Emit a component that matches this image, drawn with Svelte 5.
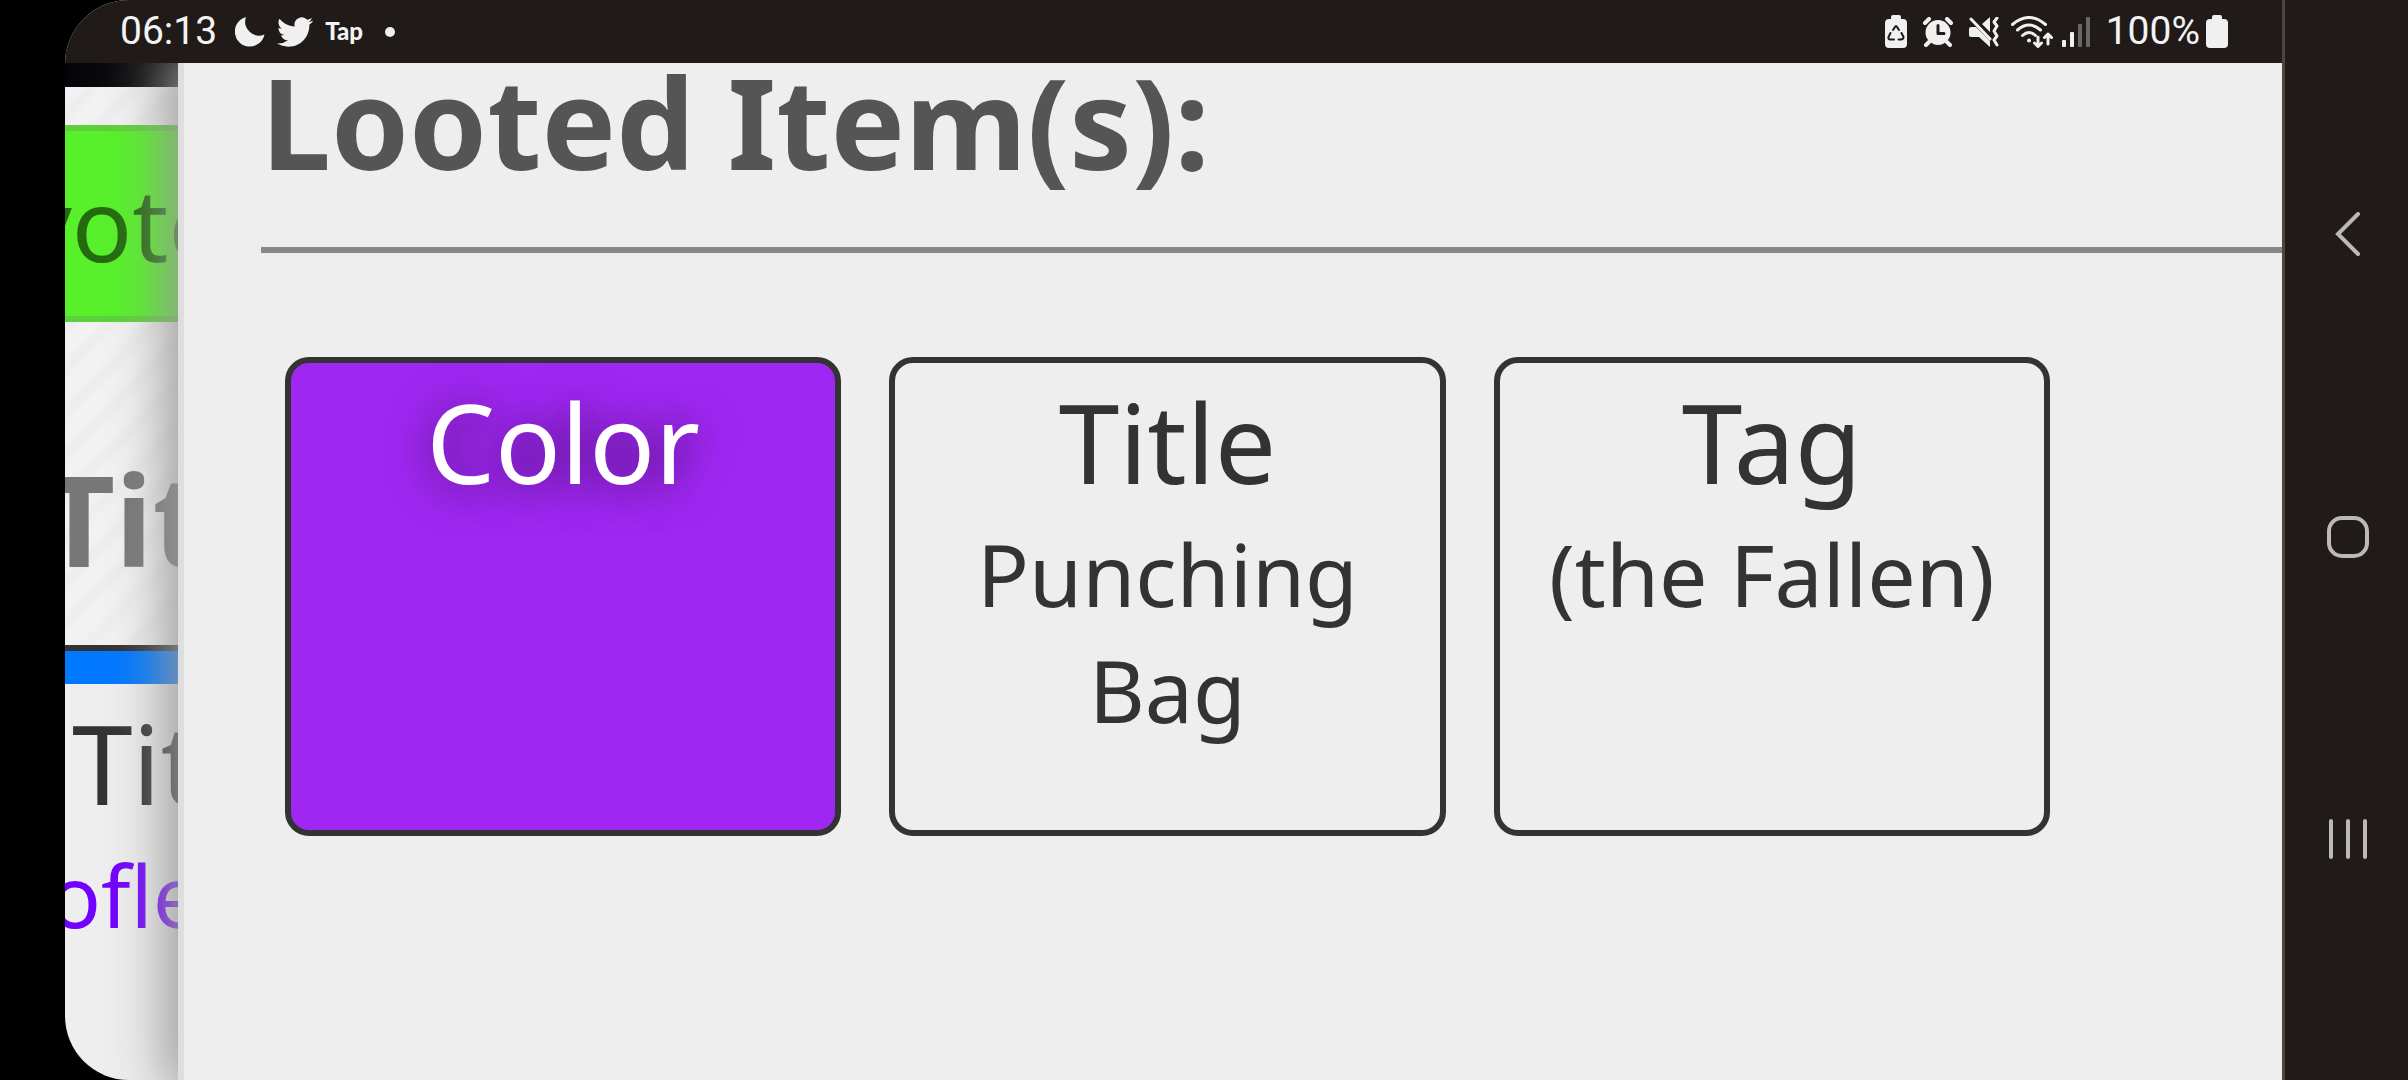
<script lang="ts">
    type Loot = {
        kind: string;
        value?: string;
        color?: string;
    };

    const loot: Loot[] = [
        { kind: "Color", color: "#a027f2" },
        { kind: "Title", value: "Punching Bag" },
        { kind: "Tag", value: "(the Fallen)" },
    ];

    const time = "06:13";
    const battery = "100%";
</script>

<div class="device">
    <div class="screen">
        <header class="status">
            <div class="left">
                <span class="clock">{time}</span>
                <svg class="moon" width="30" height="32" viewBox="0 0 30 32" aria-hidden="true">
                    <path d="M11 1A15 15 0 1 0 29.500 18.500A14 14 0 0 1 11 1Z" />
                </svg>
                <svg width="36" height="36" viewBox="0 0 24 24" aria-hidden="true">
                    <path
                        d="M23.953 4.57a10 10 0 01-2.825.775 4.958 4.958 0 002.163-2.723c-.951.555-2.005.959-3.127 1.184a4.92 4.92 0 00-8.384 4.482C7.69 8.095 4.067 6.13 1.64 3.162a4.822 4.822 0 00-.666 2.475c0 1.71.87 3.213 2.188 4.096a4.904 4.904 0 01-2.228-.616v.06a4.923 4.923 0 003.946 4.827 4.996 4.996 0 01-2.212.085 4.936 4.936 0 004.604 3.417 9.867 9.867 0 01-6.102 2.105c-.39 0-.779-.023-1.17-.067a13.995 13.995 0 007.557 2.209c9.053 0 13.998-7.496 13.998-13.985 0-.21 0-.42-.015-.63A9.935 9.935 0 0024 4.59z"
                    />
                </svg>
                <span class="tap">Tap</span>
                <span class="dot"></span>
            </div>
            <div class="right">
                <!-- battery saver -->
                <svg width="22" height="34" viewBox="0 0 22 34" aria-hidden="true">
                    <path d="M6 4V2q0-2 2-2h6q2 0 2 2v2h2q4 0 4 4v21q0 4-4 4H4q-4 0-4-4V8q0-4 4-4z" />
                    <g class="cut">
                        <path d="M8 15l2-3q1-2 2 0l2 3M16.500 18l2 4q0 2-2 2.500h-3M9 24.500H5q-2-.5-1.500-2.500l2-4" />
                    </g>
                </svg>
                <!-- alarm -->
                <svg width="30" height="30" viewBox="0 0 30 30" aria-hidden="true">
                    <circle cx="15" cy="15.500" r="12.500" />
                    <path class="line thick" d="M2 6l4-4M24 2l4 4M6 25l-3 3M24 25l3 3" />
                    <path class="cut wide" d="M15 8.500v8h6" />
                </svg>
                <!-- muted, vibrating -->
                <svg width="30" height="30" viewBox="0 0 30 30" aria-hidden="true">
                    <path d="M0 12q0-2 2-2h5l14 14v6L10 20H2q-2 0-2-2zM13 7l8-7v15z" />
                    <path class="line" d="M2 2l19 20" />
                    <path class="line" d="M28 1l-3 4 3 4-3 5 3 5-3 4 3 5" />
                </svg>
                <svg class="wifi" width="42" height="32" viewBox="0 0 42 32" aria-hidden="true">
                    <path class="line" d="M1.500 8.500q16-14 33 0M6.500 14q11.500-10 23 0M11.500 19.500q6.500-6 13 0" />
                    <circle cx="18" cy="24.500" r="2" />
                    <path class="line" d="M27 21v9M23.500 27l3.500 3.500 3.500-3.500M37 28v-10M33.500 21.500L37 18l3.500 3.500" />
                </svg>
                <svg width="28" height="30" viewBox="0 0 28 30" aria-hidden="true">
                    <rect x="0" y="23" width="4" height="7" rx="1" />
                    <rect x="8" y="15" width="4" height="15" rx="1" />
                    <rect class="dim" x="16" y="7" width="4" height="23" rx="1" />
                    <rect class="dim" x="24" y="0" width="4" height="30" rx="1" />
                </svg>
                <span class="clock">{battery}</span>
                <svg class="battery" width="22" height="34" viewBox="0 0 22 34" aria-hidden="true">
                    <path d="M6 4V2q0-2 2-2h6q2 0 2 2v2h2q4 0 4 4v21q0 4-4 4H4q-4 0-4-4V8q0-4 4-4z" />
                </svg>
            </div>
        </header>

        <div class="body">
            <div class="behind">
                <div class="topbar"></div>
                <div class="striped">
                    <div class="vote">vote</div>
                    <h2>Title</h2>
                </div>
                <div class="stripe"></div>
                <div class="entry">
                    <div class="kind">Title</div>
                    <div class="value">ofle</div>
                </div>
            </div>

            <main class="sheet">
                <h1>Looted Item(s):</h1>
                <div class="cards">
                    {#each loot as item}
                        <section
                            class="card"
                            class:colored={item.color}
                            style:background-color={item.color}
                        >
                            <div class="kind">{item.kind}</div>
                            {#if item.value}
                                <div class="value">{item.value}</div>
                            {/if}
                        </section>
                    {/each}
                </div>
            </main>
        </div>
    </div>

    <nav class="keys">
        <button aria-label="Back">
            <svg width="44" height="44" viewBox="0 0 44 44">
                <path d="M32 2L12 22l20 20" />
            </svg>
        </button>
        <button aria-label="Home">
            <svg width="44" height="44" viewBox="0 0 44 44">
                <rect x="3" y="3" width="38" height="38" rx="13" />
            </svg>
        </button>
        <button aria-label="Recent apps">
            <svg width="44" height="44" viewBox="0 0 44 44">
                <path d="M5 4v36M22 4v36M39 4v36" />
            </svg>
        </button>
    </nav>
</div>

<style>
    :global(body) {
        margin: 0;
        background: #000;
    }

    .device {
        display: flex;
        box-sizing: border-box;
        min-height: 100vh;
        padding-left: 65px;
        background: #000;
        color: #333;
        font-family: "Noto Sans", sans-serif;
    }

    .screen {
        flex: 1;
        min-width: 0;
        display: flex;
        flex-direction: column;
        border-radius: 64px 0 0 64px;
        overflow: hidden;
        background: #eee;
    }

    .status {
        display: flex;
        justify-content: space-between;
        align-items: center;
        height: 63px;
        padding: 0 54px 0 55px;
        background: #201b19;
        color: #f3f3f3;
        font-family: Roboto, sans-serif;
    }

    .status svg {
        fill: #f0f0f0;
    }

    .left,
    .right {
        display: flex;
        align-items: center;
    }

    .left {
        gap: 12px;
    }

    .right {
        gap: 16px;
    }

    .clock {
        font-size: 39px;
        line-height: 63px;
    }

    .moon {
        margin-left: 6px;
    }

    .tap {
        padding-bottom: 2px;
        font-family: Lato, sans-serif;
        font-size: 24px;
        font-weight: 900;
        line-height: 32px;
    }

    .dot {
        width: 10px;
        height: 10px;
        margin-left: 10px;
        border-radius: 50%;
        background: #f0f0f0;
    }

    .battery {
        margin-left: -10px;
    }

    .wifi {
        margin: 0 -7px 0 -4px;
    }

    .line,
    .cut {
        fill: none;
        stroke: #f0f0f0;
        stroke-width: 3;
        stroke-linecap: round;
        stroke-linejoin: round;
    }

    .thick {
        stroke-width: 4;
    }

    .cut {
        stroke: #201b19;
        stroke-width: 2;
    }

    .wide {
        stroke-width: 3;
    }

    .dim {
        fill: #6b6765;
    }

    .body {
        flex: 1;
        display: flex;
        overflow: hidden;
    }

    .behind {
        width: 113px;
        overflow: hidden;
        white-space: nowrap;
    }

    .topbar {
        height: 24px;
        background: linear-gradient(90deg, #020308, #1a1718);
    }

    .striped {
        padding-top: 38px;
        border-bottom: 6px solid #333;
        background: repeating-linear-gradient(
            135deg,
            #f2f2f2 0,
            #f2f2f2 10px,
            #ededed 20px,
            #f2f2f2 30px
        );
    }

    .vote {
        border: solid #5ed03b;
        border-width: 6px 0;
        background: #58f02a;
        color: #246b10;
        font-size: 100px;
        line-height: 185px;
        text-indent: -44px;
    }

    h2 {
        margin: 0;
        padding: 108px 0 37px;
        color: #777;
        font-size: 125px;
        line-height: 178px;
        text-indent: -22px;
    }

    .stripe {
        height: 33px;
        background: #0078ff;
    }

    .kind {
        font-size: 109px;
        line-height: 148px;
    }

    .value {
        font-size: 86px;
        line-height: 116px;
    }

    .entry {
        padding-top: 5px;
    }

    .entry .kind {
        text-indent: 7px;
    }

    .entry .value {
        color: #7300ff;
        text-indent: -16px;
    }

    .sheet {
        flex: 1;
        min-width: 0;
        border-left: 6px solid #dedede;
        padding-left: 77px;
        background: #eee;
        box-shadow: 0 0 52px 12px #999;
    }

    h1 {
        margin: 0;
        padding-bottom: 67px;
        border-bottom: 6px solid #888;
        color: #555;
        font-size: 125px;
        line-height: 117px;
    }

    .cards {
        display: grid;
        grid-template-columns: repeat(3, 1fr);
        gap: 48px;
        padding: 104px 232px 0 24px;
    }

    .card {
        box-sizing: border-box;
        min-height: 479px;
        padding: 5px 24px;
        border: 6px solid #333;
        border-radius: 24px;
        text-align: center;
    }

    .colored {
        color: #fff;
        text-shadow: 0 4px 44px rgba(0, 0, 0, 0.7);
    }

    .keys {
        display: flex;
        flex-direction: column;
        justify-content: space-between;
        align-items: center;
        box-sizing: border-box;
        width: 126px;
        padding: 212px 0 219px 3px;
        border-left: 3px solid #4d4340;
        background: #201b19;
    }

    .keys button {
        display: flex;
        padding: 0;
        border: 0;
        background: none;
    }

    .keys svg {
        fill: none;
        stroke: #bcb8b6;
        stroke-width: 4;
        stroke-linecap: round;
    }
</style>
